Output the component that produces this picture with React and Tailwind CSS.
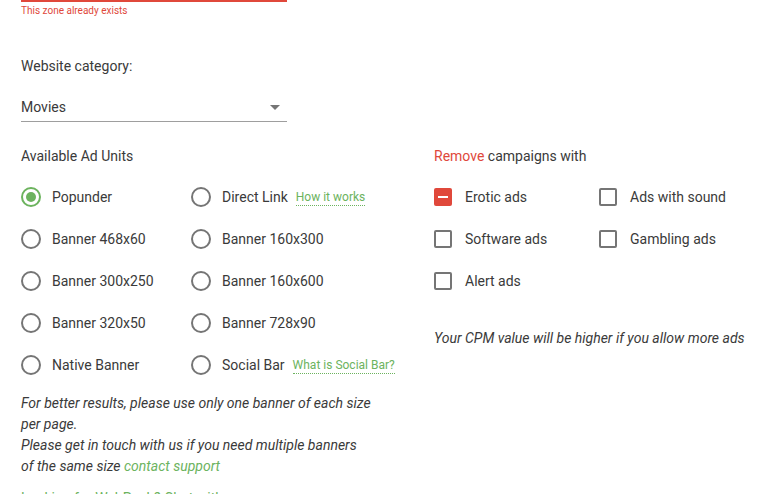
import React from "react";

function Radio({ checked, label, extra }) {
  return (
    <div className="flex h-[42px] items-center">
      <span
        className={
          "flex h-[20px] w-[20px] shrink-0 items-center justify-center rounded-full border-2 " +
          (checked ? "border-[#6cb35e]" : "border-[#757575]")
        }
      >
        {checked && <span className="h-[10px] w-[10px] rounded-full bg-[#6cb35e]" />}
      </span>
      <span className="ml-[11px] text-[14px] text-[#3a3a3a]">{label}</span>
      {extra && (
        <a className="ml-[8px] mt-[2px] border-b border-dotted border-[#6cb35e] text-[12px] leading-[15px] text-[#6cb35e]">
          {extra}
        </a>
      )}
    </div>
  );
}

function Check({ checked, label }) {
  return (
    <div className="flex h-[42px] items-center">
      {checked ? (
        <span className="flex h-[18px] w-[18px] shrink-0 items-center justify-center rounded-[2px] bg-[#e0483b]">
          <span className="h-[2px] w-[10px] bg-white" />
        </span>
      ) : (
        <span className="h-[18px] w-[18px] shrink-0 rounded-[2px] border-2 border-[#757575]" />
      )}
      <span className="ml-[13px] text-[14px] text-[#3a3a3a]">{label}</span>
    </div>
  );
}

export default function App() {
  return (
    <div className="h-[494px] overflow-hidden bg-white pl-[21px] font-['Roboto',sans-serif] text-[#3a3a3a]">
      <div className="h-[2px] w-[266px] bg-[#e0483b]" />
      <p className="mt-[3px] text-[10px] leading-[12px] text-[#e0483b]">This zone already exists</p>

      <p className="mt-[39px] text-[14px] leading-[20px]">Website category:</p>
      <div className="mt-[15px] flex h-[31px] w-[266px] items-center justify-between border-b border-[#9e9e9e] pt-[3px]">
        <span className="text-[14px]">Movies</span>
        <svg width="10" height="5" viewBox="0 0 10 5" className="mr-[7px]">
          <path d="M0 0h10L5 5z" fill="#757575" />
        </svg>
      </div>

      <div className="mt-[24px] flex">
        <div className="w-[413px] shrink-0">
          <p className="text-[14px] leading-[20px]">Available Ad Units</p>
          <div className="mt-[10px] grid grid-cols-[170px_1fr]">
            <Radio checked label="Popunder" />
            <Radio label="Direct Link" extra="How it works" />
            <Radio label="Banner 468x60" />
            <Radio label="Banner 160x300" />
            <Radio label="Banner 300x250" />
            <Radio label="Banner 160x600" />
            <Radio label="Banner 320x50" />
            <Radio label="Banner 728x90" />
            <Radio label="Native Banner" />
            <Radio label="Social Bar" extra="What is Social Bar?" />
          </div>
          <p className="mt-[7px] text-[14px] italic leading-[21px]">
            For better results, please use only one banner of each size
            <br />
            per page.
            <br />
            Please get in touch with us if you need multiple banners
            <br />
            of the same size <a className="text-[#6cb35e]">contact support</a>
          </p>
          <p className="mt-[11px] text-[14px] leading-[20px] text-[#6cb35e]">Looking for WebPush? Chat with us</p>
        </div>

        <div className="flex-1">
          <p className="text-[14px] leading-[20px]">
            <span className="text-[#e0483b]">Remove</span> campaigns with
          </p>
          <div className="mt-[10px] grid grid-cols-[165px_1fr]">
            <Check checked label="Erotic ads" />
            <Check label="Ads with sound" />
            <Check label="Software ads" />
            <Check label="Gambling ads" />
            <Check label="Alert ads" />
          </div>
          <p className="mt-[26px] text-[14px] italic leading-[20px]">
            Your CPM value will be higher if you allow more ads
          </p>
        </div>
      </div>
    </div>
  );
}
